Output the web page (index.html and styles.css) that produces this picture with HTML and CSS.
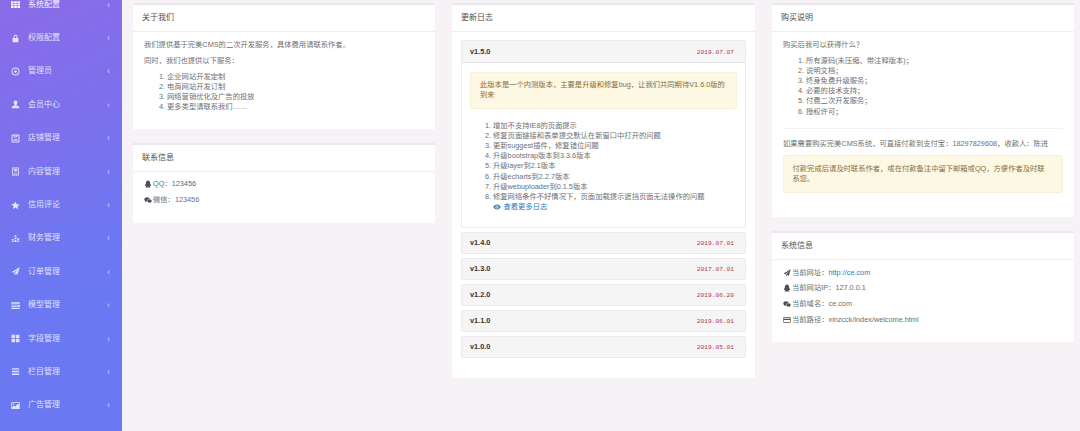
FILE: index.html
```html
<!DOCTYPE html>
<html lang="zh-CN">
<head>
<meta charset="utf-8">
<title>后台首页</title>
<link rel="stylesheet" href="styles.css">
</head>
<body>
<svg class="defs" width="0" height="0" aria-hidden="true">
  <symbol id="i-qq" viewBox="0 0 16 16"><path d="M8 1C5.400 1 3.800 3 3.800 5.600v1.200L2.400 9.600c-.5 1.200-.5 2.300-.1 2.500.3.100.8-.3 1.100-.8.2.9.7 1.600 1.300 2.100-.9.300-1.500.700-1.500 1.100 0 .5 1.300.6 2.500.6 1 0 1.800-.2 2.300-.5.500.3 1.300.5 2.300.5 1.200 0 2.500-.1 2.500-.6 0-.4-.6-.8-1.500-1.100.6-.5 1.100-1.200 1.300-2.100.3.500.8.900 1.100.8.400-.2.400-1.300-.1-2.500l-1.400-2.800V5.600C12.200 3 10.600 1 8 1z"/></symbol>
  <symbol id="i-wx" viewBox="0 0 16 16"><path d="M6 2.500C3 2.500.6 4.400.6 6.800c0 1.400.8 2.600 2 3.400L2 12l2.100-1.100c.6.200 1.200.300 1.900.300h.4c-.1-.4-.2-.7-.2-1.100 0-2.200 2.100-4 4.800-4h.4C10.900 4 8.700 2.500 6 2.500z"/><path d="M15.400 10c0-1.900-1.900-3.400-4.300-3.400S6.800 8.100 6.800 10s1.900 3.400 4.300 3.400c.5 0 1-.1 1.500-.2l1.700.9-.5-1.400c1-.6 1.600-1.600 1.600-2.700z"/></symbol>
  <symbol id="i-send" viewBox="0 0 16 16"><path d="M15.500.5 1 8.800l3.700 1.500L13 3.500 6.200 11.300V15l2.200-2.800 3.300 1.400z"/></symbol>
  <symbol id="i-card" viewBox="0 0 16 16"><path fill-rule="evenodd" d="M1.500 2.500h13a1 1 0 0 1 1 1v9a1 1 0 0 1-1 1h-13a1 1 0 0 1-1-1v-9a1 1 0 0 1 1-1zm.2 1.300v1.700h12.600V3.800zm0 4v4.400h12.600V7.800z"/></symbol>
  <symbol id="i-grid" viewBox="0 0 16 16"><path d="M0 2h4.600v3.400H0zm5.700 0h4.600v3.400H5.700zm5.700 0H16v3.400h-4.600zM0 6.400h4.600v3.400H0zm5.700 0h4.600v3.400H5.700zm5.700 0H16v3.400h-4.600zM0 10.800h4.600v3.400H0zm5.700 0h4.600v3.400H5.700zm5.700 0H16v3.400h-4.600z"/></symbol>
  <symbol id="i-lock" viewBox="0 0 16 16"><path d="M4.500 7V4.800C4.500 2.800 6 1.300 8 1.300s3.500 1.500 3.500 3.500V7h1.700v7.500H2.800V7zm1.800 0h3.400V4.800c0-1-.7-1.700-1.700-1.700s-1.700.7-1.700 1.700z"/></symbol>
  <symbol id="i-target" viewBox="0 0 16 16"><path fill-rule="evenodd" d="M8 1a7 7 0 1 1 0 14A7 7 0 0 1 8 1zm0 1.600a5.400 5.400 0 1 0 0 10.800A5.400 5.400 0 0 0 8 2.600z"/><circle cx="8" cy="8" r="2.300"/></symbol>
  <symbol id="i-user" viewBox="0 0 16 16"><path d="M8 1c2 0 3.300 1.500 3.300 3.500 0 1.500-.7 3-1.600 3.800v1.300l4.800 2v3h-13v-3l4.800-2V8.300C5.400 7.500 4.700 6 4.700 4.500 4.700 2.500 6 1 8 1z"/></symbol>
  <symbol id="i-shop" viewBox="0 0 16 16"><path fill-rule="evenodd" d="M2.500 1h11A1.500 1.500 0 0 1 15 2.500v11a1.500 1.500 0 0 1-1.500 1.500h-11A1.500 1.500 0 0 1 1 13.500v-11A1.500 1.500 0 0 1 2.500 1zm.3 1.800v10.400h10.400V2.800h-1.900C11 5.300 9.800 6.800 8 6.800S5 5.300 4.700 2.800zm3.600 0C6.600 4.200 7.100 5 8 5s1.400-.8 1.600-2.200zM4.500 9.500h7v2h-7z"/></symbol>
  <symbol id="i-doc" viewBox="0 0 16 16"><path fill-rule="evenodd" d="M2 1h12v14H2zm1.500 1.500v11h9v-11zM5 4h6v3H5zm0 4.300h6v1.100H5zm0 2.300h6v1.100H5z"/></symbol>
  <symbol id="i-star" viewBox="0 0 16 16"><path d="m8 .8 2.200 4.900 5.300.6-4 3.600 1.100 5.300L8 11.500l-4.600 2.700 1.100-5.300-4-3.600 5.300-.6z"/></symbol>
  <symbol id="i-bars" viewBox="0 0 16 16"><path d="M6.300 2h3.400v3H6.300zM6.300 6h3.400v3.500H6.300zM1.500 9h3.200v1.800H1.500zM11.300 7.500h3.200v3.300h-3.200zM1.500 11.700h3.200V14H1.500zM6.300 10.500h3.400V14H6.300zM11.300 11.700h3.200V14h-3.200z"/></symbol>
  <symbol id="i-model" viewBox="0 0 16 16"><path d="M.5 2h15v3H.500zM.5 6.500h10v1.500H.5zM.5 9.500h10V11H.5zM11.500 6.500h4V11h-4zM.5 12.500h15V14H.5z"/></symbol>
  <symbol id="i-blocks" viewBox="0 0 16 16"><path d="M1 1.500h6.300v6.200H1zm7.700 0H15v6.200H8.700zM1 9h6.300v5.500H1zm7.700 0H15v5.500H8.700z"/></symbol>
  <symbol id="i-list" viewBox="0 0 16 16"><path d="M1.500 2h13v2.600h-13zm0 4.700h13v2.600h-13zm0 4.700h13V14h-13z"/></symbol>
  <symbol id="i-image" viewBox="0 0 16 16"><path fill-rule="evenodd" d="M.5 2h15v12H.5zm1.500 1.500v7.700l3.500-3.400 2.200 2 4.300-5 1.900 2V3.500zM4.500 4.300a1.300 1.300 0 1 1 0 2.600 1.300 1.300 0 0 1 0-2.600z"/></symbol>
  <symbol id="i-eye" viewBox="0 0 16 16"><path fill-rule="evenodd" d="M8 3c3.300 0 6 2 7.500 5C14 11 11.300 13 8 13S2 11 .5 8C2 5 4.700 3 8 3zm0 1.800a3.200 3.200 0 1 0 0 6.400 3.200 3.200 0 0 0 0-6.400zM8 6.300a1.700 1.700 0 1 1 0 3.400 1.700 1.700 0 0 1 0-3.400z"/></symbol>
</svg>

<div class="layout">
  <nav class="sidebar">
    <a class="nav-item active"><svg class="nav-icon"><use href="#i-grid"/></svg><span class="nav-label">系统配置</span><span class="nav-arrow">‹</span></a>
    <a class="nav-item"><svg class="nav-icon"><use href="#i-lock"/></svg><span class="nav-label">权限配置</span><span class="nav-arrow">‹</span></a>
    <a class="nav-item"><svg class="nav-icon"><use href="#i-target"/></svg><span class="nav-label">管理员</span><span class="nav-arrow">‹</span></a>
    <a class="nav-item"><svg class="nav-icon"><use href="#i-user"/></svg><span class="nav-label">会员中心</span><span class="nav-arrow">‹</span></a>
    <a class="nav-item"><svg class="nav-icon"><use href="#i-shop"/></svg><span class="nav-label">店铺管理</span><span class="nav-arrow">‹</span></a>
    <a class="nav-item"><svg class="nav-icon"><use href="#i-doc"/></svg><span class="nav-label">内容管理</span><span class="nav-arrow">‹</span></a>
    <a class="nav-item"><svg class="nav-icon"><use href="#i-star"/></svg><span class="nav-label">信用评论</span><span class="nav-arrow">‹</span></a>
    <a class="nav-item"><svg class="nav-icon"><use href="#i-bars"/></svg><span class="nav-label">财务管理</span><span class="nav-arrow">‹</span></a>
    <a class="nav-item"><svg class="nav-icon"><use href="#i-send"/></svg><span class="nav-label">订单管理</span><span class="nav-arrow">‹</span></a>
    <a class="nav-item"><svg class="nav-icon"><use href="#i-model"/></svg><span class="nav-label">模型管理</span><span class="nav-arrow">‹</span></a>
    <a class="nav-item"><svg class="nav-icon"><use href="#i-blocks"/></svg><span class="nav-label">字段管理</span><span class="nav-arrow">‹</span></a>
    <a class="nav-item"><svg class="nav-icon"><use href="#i-list"/></svg><span class="nav-label">栏目管理</span><span class="nav-arrow">‹</span></a>
    <a class="nav-item"><svg class="nav-icon"><use href="#i-image"/></svg><span class="nav-label">广告管理</span><span class="nav-arrow">‹</span></a>
  </nav>

  <main class="content">
    <div class="column">
      <section class="card about">
        <h5 class="card-title">关于我们</h5>
        <div class="card-body">
          <p>我们提供基于完美CMS的二次开发服务，具体费用请联系作者。</p>
          <p>同时，我们也提供以下服务：</p>
          <ol>
            <li>企业网站开发定制</li>
            <li>电商网站开发订制</li>
            <li>网络营销优化及广告的投放</li>
            <li>更多类型请联系我们……</li>
          </ol>
        </div>
      </section>
      <section class="card contact">
        <h5 class="card-title">联系信息</h5>
        <div class="card-body">
          <p class="info"><svg class="info-icon"><use href="#i-qq"/></svg>QQ：<a class="link">123456</a></p>
          <p class="info"><svg class="info-icon"><use href="#i-wx"/></svg>微信：123456</p>
        </div>
      </section>
    </div>

    <div class="column">
      <section class="card changelog">
        <h5 class="card-title">更新日志</h5>
        <div class="card-body log-body">
          <div class="panel open">
            <div class="panel-head"><strong>v1.5.0</strong><code>2019.07.07</code></div>
            <div class="panel-body">
              <div class="alert">此版本是一个内测版本，主要是升级和修复bug，让我们共同期待V1.6.0版的到来</div>
              <ol class="log-list">
                <li>增加不支持IE8的页面提示</li>
                <li>修复页面链接和表单提交默认在新窗口中打开的问题</li>
                <li>更新suggest插件，修复错位问题</li>
                <li>升级bootstrap版本到3.3.6版本</li>
                <li>升级layer到2.1版本</li>
                <li>升级echarts到2.2.7版本</li>
                <li>升级webuploader到0.1.5版本</li>
                <li>修复网络条件不好情况下，页面加载提示遮挡页面无法操作的问题</li>
              </ol>
              <a class="link more"><svg class="info-icon"><use href="#i-eye"/></svg>查看更多日志</a>
            </div>
          </div>
          <div class="panel"><div class="panel-head"><strong>v1.4.0</strong><code>2019.07.01</code></div></div>
          <div class="panel"><div class="panel-head"><strong>v1.3.0</strong><code>2017.07.01</code></div></div>
          <div class="panel"><div class="panel-head"><strong>v1.2.0</strong><code>2019.06.20</code></div></div>
          <div class="panel"><div class="panel-head"><strong>v1.1.0</strong><code>2019.06.01</code></div></div>
          <div class="panel"><div class="panel-head"><strong>v1.0.0</strong><code>2019.05.01</code></div></div>
        </div>
      </section>
    </div>

    <div class="column">
      <section class="card purchase">
        <h5 class="card-title">购买说明</h5>
        <div class="card-body">
          <p>购买后我可以获得什么？</p>
          <ol>
            <li>所有源码(未压缩、带注释版本)；</li>
            <li>说明文档；</li>
            <li>终身免费升级服务；</li>
            <li>必要的技术支持；</li>
            <li>付费二次开发服务；</li>
            <li>授权许可；</li>
          </ol>
          <hr class="divider">
          <p>如果需要购买完美CMS系统，可直接付款到支付宝：18297829608，收款人：陈进</p>
          <div class="alert">付款完成后请及时联系作者，或在付款备注中留下邮箱或QQ，方便作者及时联系您。</div>
        </div>
      </section>
      <section class="card sysinfo">
        <h5 class="card-title">系统信息</h5>
        <div class="card-body">
          <p class="info"><svg class="info-icon"><use href="#i-send"/></svg>当前网址：<a class="link">http://ce.com</a></p>
          <p class="info"><svg class="info-icon"><use href="#i-qq"/></svg>当前网站IP：127.0.0.1</p>
          <p class="info"><svg class="info-icon"><use href="#i-wx"/></svg>当前域名：ce.com</p>
          <p class="info"><svg class="info-icon"><use href="#i-card"/></svg>当前路径：xinzcck/index/welcome.html</p>
        </div>
      </section>
    </div>
  </main>
</div>
</body>
</html>
```
FILE: styles.css
```css
* { box-sizing: border-box; }
html, body { margin: 0; height: 431px; overflow: hidden; }
body {
  background: #f6f2f6;
  color: #6e7072;
  font-family: "Liberation Sans", "Noto Sans CJK SC", sans-serif;
  font-size: 7.3px;
  line-height: 10.2px;
}
.defs { position: absolute; }
.layout { display: flex; height: 431px; }

.sidebar {
  width: 122px;
  flex: none;
  height: 431px;
  overflow: hidden;
  background: linear-gradient(155deg, #8a6be8 0%, #7b71ed 35%, #6b78f2 62%, #6a78f3 100%);
  display: flex;
  flex-direction: column;
}
.nav-item {
  flex: none;
  height: 33.4px;
  display: flex;
  align-items: center;
  padding-left: 11px;
  color: rgba(255, 255, 255, .8);
  font-size: 8px;
  line-height: 10px;
}
.nav-item.active { margin-top: -12px; color: rgba(255, 255, 255, .95); }
.nav-icon { width: 9px; height: 9px; fill: currentColor; flex: none; margin-right: 8px; }
.nav-label { flex: 1; }
.nav-arrow { width: 15px; font-size: 9px; color: rgba(255, 255, 255, .7); }

.content {
  flex: 1;
  display: grid;
  grid-template-columns: 302px 303px 302px;
  column-gap: 17px;
  align-items: start;
  padding: 3px 7px 0 11px;
}
.column { display: flex; flex-direction: column; gap: 14px; }

.card { background: #fff; border-top: 2px solid #e9e8ee; }
.card-title {
  margin: 0;
  height: 26.5px;
  padding: 8px 9px 0;
  font-size: 8px;
  line-height: 10px;
  font-weight: 400;
  color: #4d5052;
  border-bottom: 1px solid #f0eff3;
}
.card-body { padding: 8px 11px 0; }
.card-body p { margin: 0 0 5.8px; }
ol { margin: 0; padding: 0 0 0 23px; }

.about { height: 126px; }
.contact { height: 80px; }
.contact .card-body { padding-top: 7.5px; }
.info { display: flex; align-items: center; height: 10.2px; }
.info-icon { width: 8px; height: 8px; fill: #4d5052; flex: none; margin-right: 1px; }
.link { color: #337ab7; }
.contact .link { color: #3f6f96; }

.changelog { height: 375px; }
.log-body { padding: 8.5px 9px 0; }
.panel {
  border: 1px solid #ebebee;
  border-radius: 2px;
  margin-bottom: 4px;
}
.panel-head {
  height: 20px;
  background: #f5f5f6;
  padding: 1px 11px 0 8px;
  display: flex;
  align-items: center;
  justify-content: space-between;
}
.open .panel-head { height: 21.5px; border-bottom: 1px solid #e6e3ec; }
.panel-head strong { font-size: 7.3px; color: #333; font-weight: 700; }
.panel-head code {
  font-family: "Liberation Mono", monospace;
  font-size: 6.2px;
  color: #b5344f;
  padding-top: 2px;
}
.panel-body { height: 164px; padding: 9px 8px 0; }
.alert {
  background: #fcf8e3;
  border: 1px solid #faf0d6;
  border-radius: 2px;
  color: #8a6d3b;
  padding: 7.7px 9px;
}
.log-list { margin-top: 11.5px; padding-left: 23px; line-height: 10.15px; }
.more { display: flex; align-items: center; padding-left: 23px; gap: 1.5px; }
.more .info-icon { fill: #337ab7; }

.purchase { height: 214px; }
.purchase hr.divider { margin: 11px 0 10.5px; border: 0; border-top: 1px solid #f2f1f4; }
.purchase .alert { margin-top: 1.5px; padding-right: 15px; padding-left: 8.5px; }
.purchase .card-body > ol { margin-top: 5.8px; }
.sysinfo { height: 111px; }
.sysinfo .card-body { padding-top: 8px; }
.sysinfo .info { margin-bottom: 5.7px; }
```
